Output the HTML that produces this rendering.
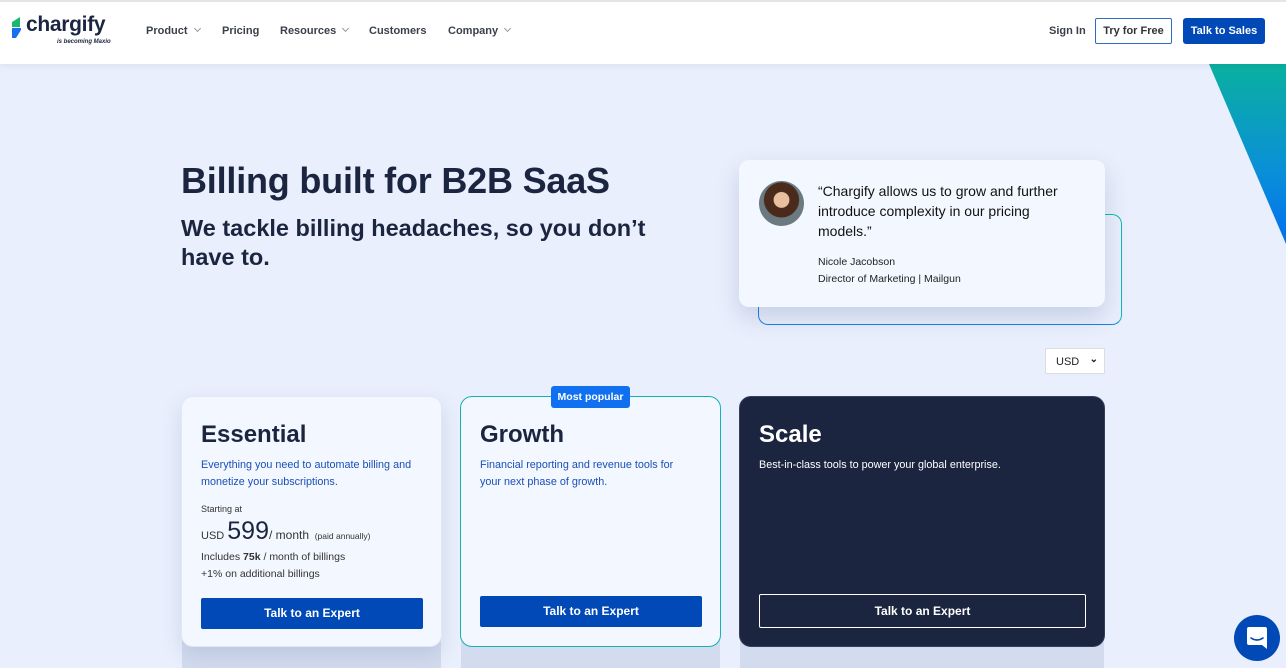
<!DOCTYPE html>
<html><head><meta charset="utf-8">
<style>
*{box-sizing:border-box;margin:0;padding:0}
body{width:1286px;height:668px;overflow:hidden;background:#e9effc;font-family:"Liberation Sans",sans-serif;position:relative;color:#1b2540}
.hdr{position:absolute;left:0;top:0;width:1286px;height:64px;background:#fff;border-top:2px solid #e4e4e4;box-shadow:0 2px 6px rgba(0,0,0,.06);z-index:5}
.nav{position:absolute;top:23px;font-size:11px;font-weight:bold;color:#3a3f4a}
.nav span{position:absolute;white-space:nowrap}
.chev{display:inline-block;width:5px;height:5px;border-right:1px solid #999;border-bottom:1px solid #999;transform:rotate(45deg);margin-left:7px;position:relative;top:-3px}
.stripe{position:absolute;left:1209px;top:64px;width:100px;height:180px;background:linear-gradient(180deg,#0ab0a0,#0a8fd8 60%,#0070f0);clip-path:polygon(0 0,100% 0,100% 100%,77% 100%)}
h1{position:absolute;left:181px;top:160px;font-size:36px;font-weight:bold;color:#1b2540;letter-spacing:-.2px}
h2{position:absolute;left:181px;top:214px;font-size:23.5px;font-weight:bold;color:#1b2540;line-height:29px;width:500px}
.outline{position:absolute;left:758px;top:214px;width:364px;height:111px;border:1px solid #10b8b0;border-radius:10px;border-left-color:#1a80e0;border-bottom-color:#1a80e0}
.quote{position:absolute;left:739px;top:160px;width:366px;height:147px;background:#f3f7ff;border-radius:10px;box-shadow:0 10px 24px rgba(60,80,140,.2)}
.av{position:absolute;left:20px;top:21px;width:45px;height:45px;border-radius:50%;background:radial-gradient(circle at 50% 42%,#e8c0a0 0 22%,#4a2a1a 24% 50%,#6a7a80 52%)}
.qt{position:absolute;left:79px;top:21px;font-size:14px;line-height:20px;color:#111;width:246px}
.qn{position:absolute;left:79px;top:94px;font-size:10.5px;line-height:17px;color:#222}
.sel{position:absolute;left:1045px;top:348px;width:60px;height:26px;background:#fff;border:1px solid #ddd;font-size:11px;padding:7px 0 0 10px;color:#222}
.card{position:absolute;top:396px;border-radius:12px;background:#f3f7ff}
.card .t{position:absolute;left:19px;top:24px;font-size:24px;font-weight:bold}
.card .d{position:absolute;left:19px;top:60px;font-size:10.8px;line-height:17px;color:#1a4fb8;width:232px}
.btn{position:absolute;height:31px;background:#0049b7;color:#fff;font-size:12px;font-weight:bold;text-align:center;line-height:31px;border-radius:2px}
.under{position:absolute;top:640px;height:28px;background:#d3dbee;border-radius:0}
</style></head><body>
<div class="hdr">
 <svg style="position:absolute;left:12px;top:15px" width="13" height="22" viewBox="0 0 13 22"><path d="M0 5 L8 0 V10 H0Z" fill="#18b870"/><path d="M0 11 H9 V13 L4 21 H0Z" fill="#1a6ef0"/></svg>
 <div style="position:absolute;left:26px;top:11px;font-size:21px;font-weight:bold;color:#1b2540;letter-spacing:-.3px">chargify</div>
 <div style="position:absolute;left:57px;top:37px;font-size:6px;font-style:italic;font-weight:bold;color:#1b2540">is becoming Maxio</div>
 <div class="nav"><span style="left:146px">Product<i class="chev"></i></span><span style="left:222px">Pricing</span><span style="left:280px">Resources<i class="chev"></i></span><span style="left:369px">Customers</span><span style="left:448px">Company<i class="chev"></i></span></div>
 <div style="position:absolute;left:1049px;top:23px;font-size:11px;font-weight:bold;color:#3a3f4a">Sign In</div>
 <div style="position:absolute;left:1095px;top:16px;width:77px;height:26px;border:1px solid #2d6cc0;border-radius:2px;font-size:11px;font-weight:bold;color:#333;text-align:center;line-height:24px">Try for Free</div>
 <div style="position:absolute;left:1183px;top:16px;width:82px;height:26px;background:#0049b7;border-radius:3px;font-size:11px;font-weight:bold;color:#fff;text-align:center;line-height:26px">Talk to Sales</div>
</div>
<div class="stripe"></div>
<h1>Billing built for B2B SaaS</h1>
<h2>We tackle billing headaches, so you don’t have to.</h2>
<div class="outline"></div>
<div class="quote"><div class="av"></div>
<div class="qt">“Chargify allows us to grow and further introduce complexity in our pricing models.”</div>
<div class="qn">Nicole Jacobson<br>Director of Marketing | Mailgun</div></div>
<div class="sel">USD<span style="position:absolute;right:6px;top:5px;font-size:10px;font-weight:bold">&#8964;</span></div>

<div class="under" style="left:182px;width:259px"></div>
<div class="under" style="left:461px;width:259px"></div>
<div class="under" style="left:740px;width:364px"></div>

<div class="card" style="left:181px;width:261px;height:251px;box-shadow:0 8px 20px rgba(60,80,140,.15);border:1px solid #e2e8f4">
 <div class="t">Essential</div>
 <div class="d">Everything you need to automate billing and monetize your subscriptions.</div>
 <div style="position:absolute;left:19px;top:107px;font-size:9px;color:#333">Starting at</div>
 <div style="position:absolute;left:19px;top:120px;color:#333;white-space:nowrap"><span style="font-size:11px">USD </span><span style="font-size:25px;color:#1b2540">599</span><span style="font-size:12px">/ month </span><span style="font-size:8.5px">&nbsp;(paid annually)</span></div>
 <div style="position:absolute;left:19px;top:152px;font-size:10.5px;line-height:17px;color:#333">Includes <b>75k</b> / month of billings<br>+1% on additional billings</div>
 <div class="btn" style="left:19px;top:201px;width:222px">Talk to an Expert</div>
</div>
<div class="card" style="left:460px;width:261px;height:251px;border:1px solid #14b0b8">
 <div class="t">Growth</div>
 <div class="d" style="width:215px">Financial reporting and revenue tools for your next phase of growth.</div>
 <div class="btn" style="left:19px;top:199px;width:222px">Talk to an Expert</div>
</div>
<div style="position:absolute;left:551px;top:386px;width:79px;height:22px;background:#1070f0;border-radius:3px;color:#fff;font-size:10.5px;font-weight:bold;text-align:center;line-height:22px">Most popular</div>
<div class="card" style="left:739px;width:366px;height:251px;background:#1b2540;border:1px solid #33405c">
 <div class="t" style="color:#fff">Scale</div>
 <div class="d" style="color:#fff;width:320px">Best-in-class tools to power your global enterprise.</div>
 <div class="btn" style="left:19px;top:197px;width:327px;height:34px;line-height:32px;background:transparent;border:1px solid #fff">Talk to an Expert</div>
</div>
<div style="position:absolute;left:1234px;top:615px;width:46px;height:46px;border-radius:50%;background:#0049b7">
 <svg style="position:absolute;left:12px;top:12px" width="22" height="23" viewBox="0 0 22 23"><path d="M3 0H19Q21 0 21 2V22L16 18H3Q1 18 1 16V2Q1 0 3 0Z" fill="#fff"/><path d="M5 11Q11 15 17 11" stroke="#0049b7" stroke-width="1.6" fill="none" stroke-linecap="round"/></svg>
</div>
</body></html>
